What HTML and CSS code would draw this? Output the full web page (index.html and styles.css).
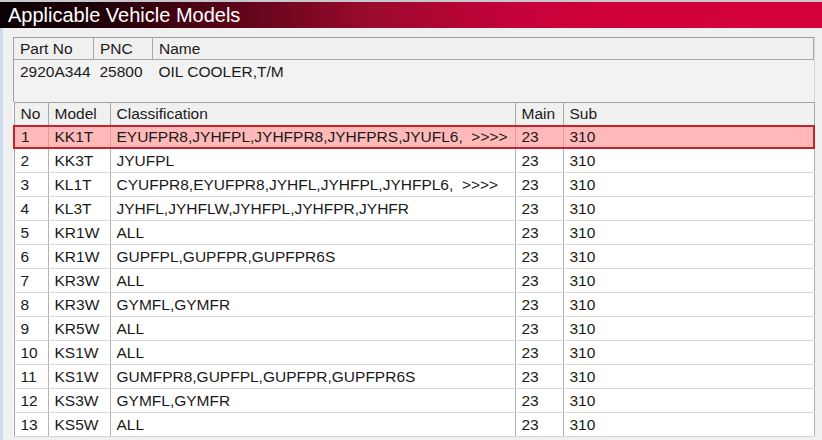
FILE: index.html
```html
<!DOCTYPE html>
<html>
<head>
<meta charset="utf-8">
<link rel="stylesheet" href="styles.css">
</head>
<body>
<div class="titlebar"><span class="title">Applicable Vehicle Models</span></div>
<div class="content">
  <div class="partbox">
    <table class="parts">
      <thead>
        <tr><th class="c-part">Part No</th><th class="c-pnc">PNC</th><th class="c-name">Name</th></tr>
      </thead>
      <tbody>
        <tr><td>2920A344</td><td>25800</td><td>OIL COOLER,T/M</td></tr>
      </tbody>
    </table>
  </div>
  <table class="grid">
    <thead>
      <tr><th class="c-no">No</th><th class="c-model">Model</th><th class="c-class">Classification</th><th class="c-main">Main</th><th class="c-sub">Sub</th></tr>
    </thead>
    <tbody>
      <tr class="sel"><td>1</td><td>KK1T</td><td>EYUFPR8,JYHFPL,JYHFPR8,JYHFPRS,JYUFL6,&nbsp;&nbsp;&gt;&gt;&gt;&gt;</td><td>23</td><td>310</td></tr>
      <tr><td>2</td><td>KK3T</td><td>JYUFPL</td><td>23</td><td>310</td></tr>
      <tr><td>3</td><td>KL1T</td><td>CYUFPR8,EYUFPR8,JYHFL,JYHFPL,JYHFPL6,&nbsp;&nbsp;&gt;&gt;&gt;&gt;</td><td>23</td><td>310</td></tr>
      <tr><td>4</td><td>KL3T</td><td>JYHFL,JYHFLW,JYHFPL,JYHFPR,JYHFR</td><td>23</td><td>310</td></tr>
      <tr><td>5</td><td>KR1W</td><td>ALL</td><td>23</td><td>310</td></tr>
      <tr><td>6</td><td>KR1W</td><td>GUPFPL,GUPFPR,GUPFPR6S</td><td>23</td><td>310</td></tr>
      <tr><td>7</td><td>KR3W</td><td>ALL</td><td>23</td><td>310</td></tr>
      <tr><td>8</td><td>KR3W</td><td>GYMFL,GYMFR</td><td>23</td><td>310</td></tr>
      <tr><td>9</td><td>KR5W</td><td>ALL</td><td>23</td><td>310</td></tr>
      <tr><td>10</td><td>KS1W</td><td>ALL</td><td>23</td><td>310</td></tr>
      <tr><td>11</td><td>KS1W</td><td>GUMFPR8,GUPFPL,GUPFPR,GUPFPR6S</td><td>23</td><td>310</td></tr>
      <tr><td>12</td><td>KS3W</td><td>GYMFL,GYMFR</td><td>23</td><td>310</td></tr>
      <tr><td>13</td><td>KS5W</td><td>ALL</td><td>23</td><td>310</td></tr>
    </tbody>
  </table>
</div>
</body>
</html>
```
FILE: styles.css
```css
html, body {
  margin: 0;
  padding: 0;
}
body {
  width: 822px;
  height: 440px;
  overflow: hidden;
  background: #f0f0f0;
  font-family: "Liberation Sans", Arial, sans-serif;
  color: #1a1a1a;
}
.titlebar {
  height: 26px;
  border-top: 2px solid #c8c8cc;
  background: linear-gradient(90deg, #0a0003 0%, #1e0007 12%, #5a0418 28%, #9a0a2c 45%, #c4023a 62%, #d1003a 75%, #d4003b 100%);
  display: flex;
  align-items: center;
  padding-left: 8px;
}
.title {
  color: #ffffff;
  font-size: 20px;
  line-height: 26px;
}
.content {
  border-left: 3px solid #cddcee;
  padding: 9px 7px 0 10px;
  height: 412px;
  box-sizing: border-box;
  display: flex;
  flex-direction: column;
}
.partbox {
  height: 65px;
  flex: none;
  border: 1px solid #a0a0a0;
  border-right-color: #d8d8d8;
  border-bottom: none;
  background: #f2f2f2;
  box-sizing: border-box;
}
table {
  border-collapse: collapse;
  table-layout: fixed;
  width: 100%;
  font-size: 15.5px;
}
th, td {
  text-align: left;
  font-weight: normal;
  padding: 0 0 0 6px;
  white-space: nowrap;
  overflow: hidden;
}
.parts th {
  height: 21px;
  background: #f0f0f0;
  border-right: 1px solid #a8a8a8;
  border-bottom: 1px solid #a8a8a8;
}
.parts td {
  height: 24px;
}
.c-part { width: 73px; }
.c-pnc { width: 52px; }
.grid {
  flex: none;
  border: 1px solid #a0a0a0;
  border-right-color: #c8c8c8;
  background: #ffffff;
}
.grid th {
  height: 22px;
  background: #f0f0f0;
  border-right: 1px solid #a8a8a8;
  border-bottom: 1px solid #a8a8a8;
}
.grid td {
  height: 23px;
  border-right: 1px solid #b4b4b4;
  border-bottom: 1px solid #d6d6d6;
}
.c-no { width: 27px; }
.c-model { width: 55px; }
.c-class { width: 398px; }
.c-main { width: 41px; }
.grid tr.sel td {
  background: #ffb9b9;
  border-top: 2px solid #c4222c;
  border-bottom: 2px solid #c4222c;
  border-right-color: #e69a9a;
  height: 20px;
}
.grid tr.sel td:first-child {
  border-left: 2px solid #c4222c;
}
.grid tr.sel td:last-child {
  border-right: 2px solid #c4222c;
}
```
